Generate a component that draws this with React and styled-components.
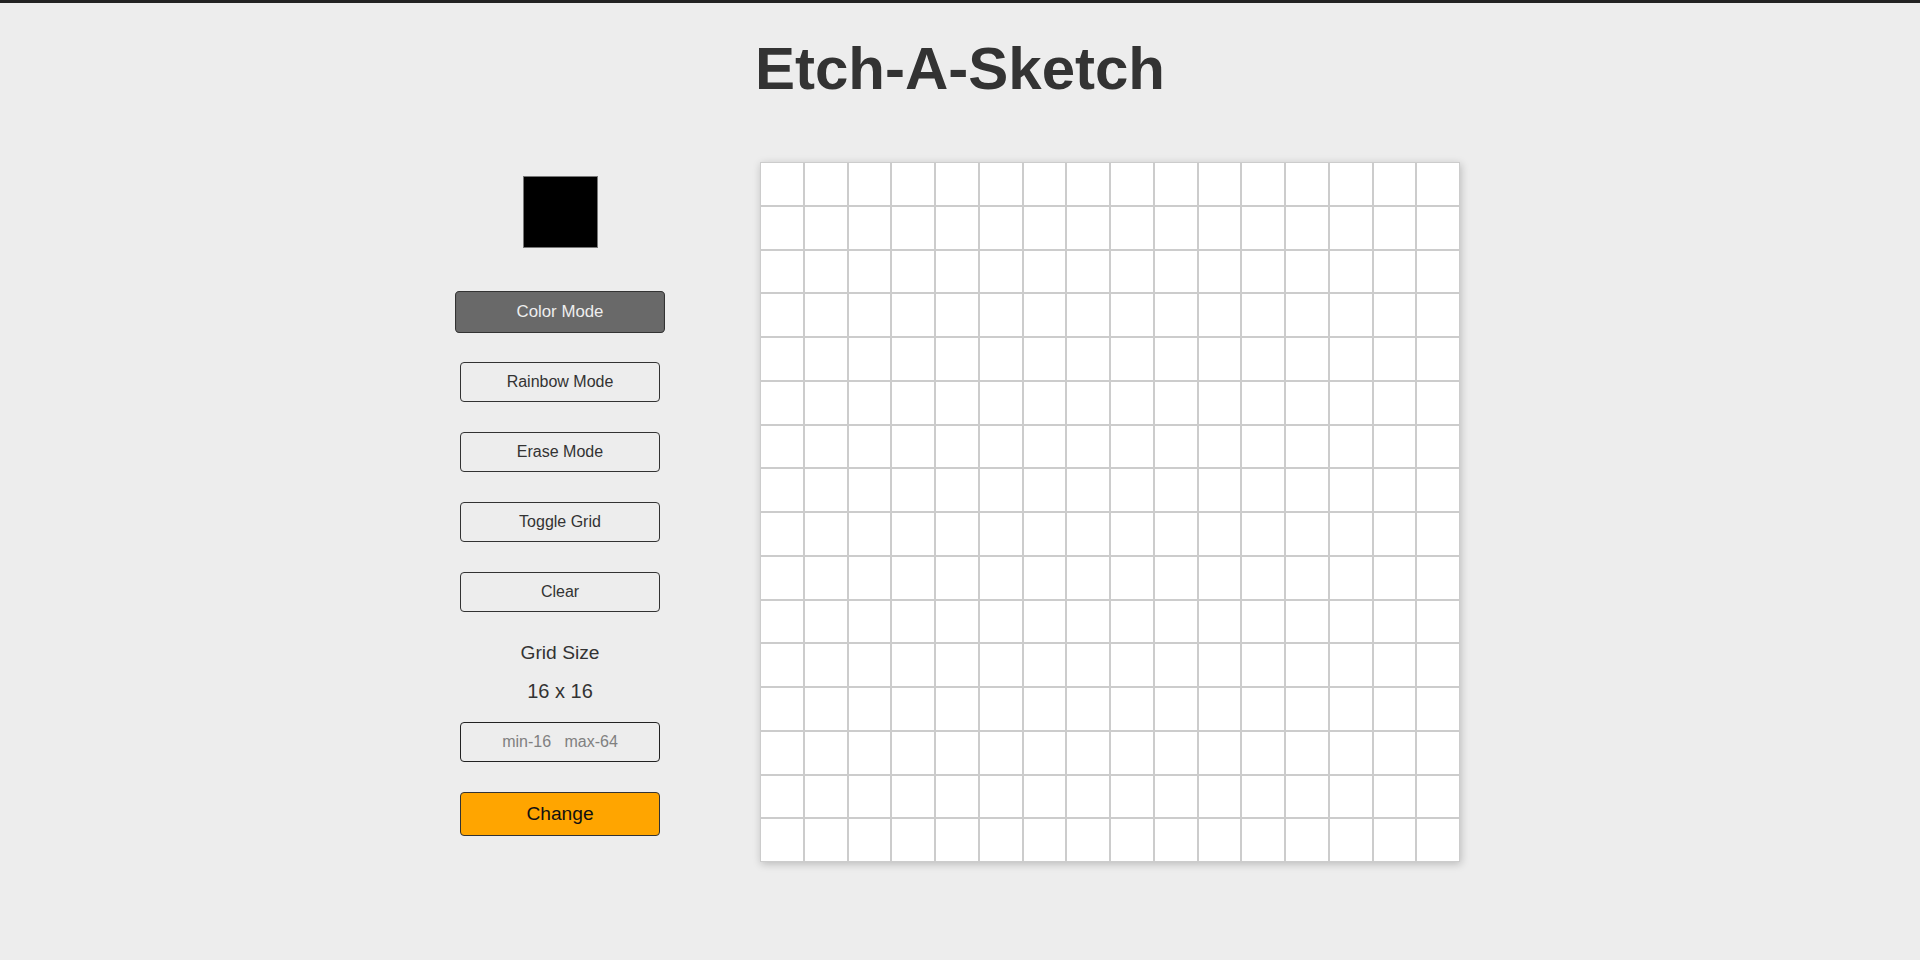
import React, { useState } from "react";
import styled, { createGlobalStyle } from "styled-components";

const GlobalStyle = createGlobalStyle`
  body {
    margin: 0;
    background: #ededed;
    font-family: "Liberation Sans", Arial, sans-serif;
    color: #333;
  }
`;

const Page = styled.div`
  min-height: 957px;
  border-top: 3px solid #222;
`;

const Title = styled.h1`
  margin: 31px 0 0;
  text-align: center;
  font-size: 60px;
  font-weight: bold;
  color: #333;
`;

const Main = styled.main`
  display: flex;
  justify-content: center;
  align-items: flex-start;
  gap: 100px;
  margin-top: 59px;
`;

const Panel = styled.div`
  width: 200px;
  display: flex;
  flex-direction: column;
  align-items: center;
  gap: 30px;
  padding-top: 14px;
`;

const Swatch = styled.div`
  width: 73px;
  height: 70px;
  background: ${(p) => p.color};
  border: 1px solid #777;
  margin-bottom: 14px;
`;

const ModeButton = styled.button`
  width: 200px;
  height: 40px;
  box-sizing: border-box;
  border: 1px solid #333;
  border-radius: 4px;
  background: ${(p) => (p.$active ? "#696969" : "transparent")};
  color: ${(p) => (p.$active ? "#eee" : "#333")};
  font-family: "Liberation Sans", Arial, sans-serif;
  font-size: 16px;
  cursor: pointer;
  transform: ${(p) => (p.$active ? "scale(1.05)" : "none")};
`;

const SizeInfo = styled.div`
  display: flex;
  flex-direction: column;
  align-items: center;
  gap: 16px;
  margin-bottom: -10px;
  color: #333;
`;

const SizeLabel = styled.div`
  font-size: ${(p) => p.$size}px;
  line-height: 22px;
`;

const SizeInput = styled.input`
  width: 200px;
  height: 40px;
  box-sizing: border-box;
  border: 1px solid #222;
  border-radius: 4px;
  background: transparent;
  text-align: center;
  font-family: "Liberation Sans", Arial, sans-serif;
  font-size: 16px;
  &::placeholder {
    color: #808080;
  }
`;

const ChangeButton = styled.button`
  width: 200px;
  height: 44px;
  box-sizing: border-box;
  border: 1px solid #333;
  border-radius: 4px;
  background: #ffa500;
  color: #111;
  font-family: "Liberation Sans", Arial, sans-serif;
  font-size: 19.2px;
  cursor: pointer;
`;

const Board = styled.div`
  width: 700px;
  height: 700px;
  display: grid;
  grid-template-columns: repeat(${(p) => p.size}, 1fr);
  grid-template-rows: repeat(${(p) => p.size}, 1fr);
  background: #fff;
  box-shadow: 1px 2px 8px rgba(0, 0, 0, 0.22);
`;

const Cell = styled.div`
  box-sizing: border-box;
  border: ${(p) => (p.$lines ? "1px solid #ccc" : "none")};
  background: ${(p) => p.color || "#fff"};
`;

const modes = ["Color Mode", "Rainbow Mode", "Erase Mode"];

export default function App() {
  const [mode, setMode] = useState("Color Mode");
  const [lines, setLines] = useState(true);
  const size = 16;

  return (
    <Page>
      <GlobalStyle />
      <Title>Etch-A-Sketch</Title>
      <Main>
        <Panel>
          <Swatch color="#000" />
          {modes.map((m) => (
            <ModeButton key={m} $active={mode === m} onClick={() => setMode(m)}>
              {m}
            </ModeButton>
          ))}
          <ModeButton onClick={() => setLines(!lines)}>Toggle Grid</ModeButton>
          <ModeButton>Clear</ModeButton>
          <SizeInfo>
            <SizeLabel $size={19.2}>Grid Size</SizeLabel>
            <SizeLabel $size={20}>
              {size} x {size}
            </SizeLabel>
          </SizeInfo>
          <SizeInput placeholder={"min-16\u00a0\u00a0\u00a0max-64"} />
          <ChangeButton>Change</ChangeButton>
        </Panel>
        <Board size={size}>
          {Array.from({ length: size * size }, (_, i) => (
            <Cell key={i} $lines={lines} />
          ))}
        </Board>
      </Main>
    </Page>
  );
}
